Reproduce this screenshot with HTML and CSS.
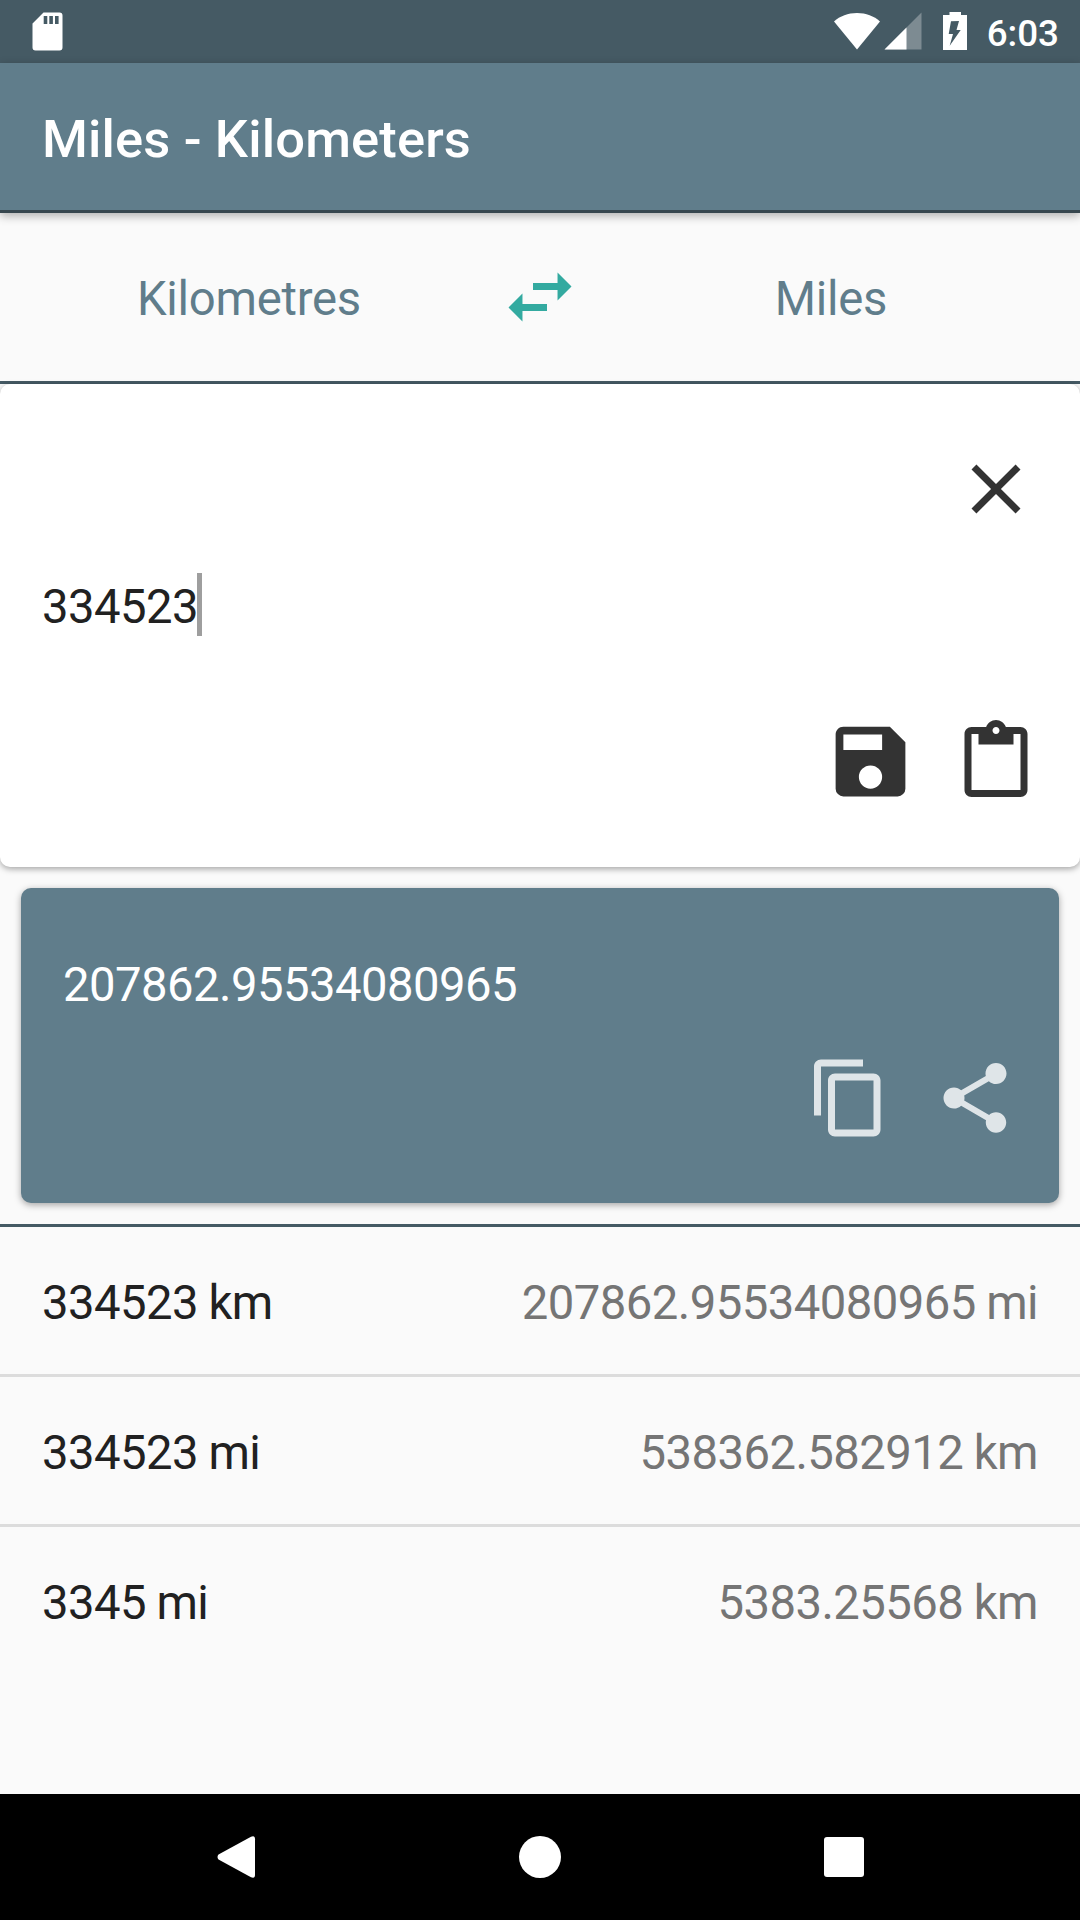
FILE: index.html
```
<!DOCTYPE html>
<html lang="en">
<head>
  <meta charset="UTF-8" />
  <meta name="viewport" content="width=device-width, initial-scale=1.0"/>
  <title>Miles - Kilometers</title>
  <link rel="stylesheet" href="styles.css">
</head>
<body>
  <div class="screen">
    <div class="status-bar">
      <svg class="sd-icon" width="31" height="39" viewBox="0 0 31 39" fill="#fff">
        <path fill-rule="evenodd" d="M11.5 0.5H27.5a3 3 0 0 1 3 3V35.5a3 3 0 0 1-3 3H3.5a3 3 0 0 1-3-3V11.5ZM11.7 4v8h3.6v-8ZM17.3 4v8h3.6v-8ZM23 4v8h3.6v-8Z"/>
      </svg>
      <div class="status-right">
        <svg class="wifi-icon" width="46" height="37" viewBox="0 0 46 37" fill="#fff">
          <path d="M0 8.5C6 3 14 0 23 0s17 3 23 8.5L23 36.5Z"/>
        </svg>
        <svg class="signal-icon" width="38" height="38" viewBox="0 0 38 38" fill="#fff">
          <path opacity="0.3" d="M0.5 37.5H37.5V0.5Z"/>
          <path d="M0.5 37.5H22.5V15.5Z"/>
        </svg>
        <svg class="battery-icon" width="24" height="38" viewBox="0 0 24 38" fill="#fff">
          <path fill-rule="evenodd" d="M6.5 0H18V3H24V38H0V3H6.5ZM8 9.2L5.7 22H10L6.7 33.8L17.7 18H13.5L16 9Z"/>
        </svg>
        <span class="time">6:03</span>
      </div>
    </div>

    <div class="app-bar">
      <h1>Miles - Kilometers</h1>
    </div>

    <div class="units">
      <span class="unit">Kilometres</span>
      <svg class="icon swap" viewBox="0 0 24 24">
        <path d="M6.99 11L3 15l3.99 4v-3H14v-2H6.99v-3zM21 9l-3.99-4v3H10v2h7.01v3L21 9z"/>
      </svg>
      <span class="unit">Miles</span>
    </div>

    <div class="input-card">
      <svg class="icon" viewBox="0 0 24 24">
        <path d="M19 6.41L17.59 5 12 10.59 6.41 5 5 6.41 10.59 12 5 17.59 6.41 19 12 13.41 17.59 19 19 17.59 13.41 12z"/>
      </svg>
      <div class="field"><span>334523</span><i class="cursor"></i></div>
      <div class="actions">
        <svg class="icon save" viewBox="0 0 24 24">
          <path d="M15 9H5V5H15M12 19A3 3 0 0 1 9 16A3 3 0 0 1 12 13A3 3 0 0 1 15 16A3 3 0 0 1 12 19M17 3H5C3.89 3 3 3.9 3 5V19A2 2 0 0 0 5 21H19A2 2 0 0 0 21 19V7L17 3Z"/>
        </svg>
        <svg class="icon" viewBox="0 0 24 24">
          <path d="M19 2h-4.18C14.4.84 13.3 0 12 0c-1.3 0-2.4.84-2.82 2H5c-1.1 0-2 .9-2 2v16c0 1.1.9 2 2 2h14c1.1 0 2-.9 2-2V4c0-1.1-.9-2-2-2zm-7 0c.55 0 1 .45 1 1s-.45 1-1 1-1-.45-1-1 .45-1 1-1zm7 18H5V4h2v3h10V4h2v16z"/>
        </svg>
      </div>
    </div>

    <div class="result-card">
      <div class="result">207862.95534080965</div>
      <div class="actions">
        <svg class="icon" viewBox="0 0 24 24">
          <path d="M16 1H4c-1.1 0-2 .9-2 2v14h2V3h12V1zm3 4H8c-1.1 0-2 .9-2 2v14c0 1.1.9 2 2 2h11c1.1 0 2-.9 2-2V7c0-1.1-.9-2-2-2zm0 16H8V7h11v14z"/>
        </svg>
        <svg class="icon" viewBox="0 0 24 24">
          <path d="M18 16.08c-.76 0-1.44.3-1.96.77L8.91 12.7c.05-.23.09-.46.09-.7s-.04-.47-.09-.7l7.05-4.11c.54.5 1.25.81 2.04.81 1.66 0 3-1.34 3-3s-1.34-3-3-3-3 1.34-3 3c0 .24.04.47.09.7L8.04 9.81C7.5 9.31 6.79 9 6 9c-1.66 0-3 1.34-3 3s1.34 3 3 3c.79 0 1.5-.31 2.04-.81l7.12 4.16c-.05.21-.08.43-.08.65 0 1.61 1.31 2.92 2.92 2.92s2.92-1.31 2.92-2.92-1.31-2.92-2.92-2.92z"/>
        </svg>
      </div>
    </div>

    <div class="history">
      <div class="row">
        <span class="from">334523 km</span>
        <span class="to">207862.95534080965 mi</span>
      </div>
      <div class="row">
        <span class="from">334523 mi</span>
        <span class="to">538362.582912 km</span>
      </div>
      <div class="row">
        <span class="from">3345 mi</span>
        <span class="to">5383.25568 km</span>
      </div>
    </div>

    <div class="nav-bar">
      <svg width="42" height="42" viewBox="0 0 42 42" fill="#fff">
        <path d="M2.5 18.5L35 0.7Q39 -1 39 3.2V38.8Q39 43 35 41.3L2.5 23.5Q0.5 21 2.5 18.5Z"/>
      </svg>
      <svg width="42" height="42" viewBox="0 0 42 42" fill="#fff">
        <circle cx="21" cy="21" r="21"/>
      </svg>
      <svg width="42" height="42" viewBox="0 0 42 42" fill="#fff">
        <rect x="2" y="1" width="40" height="40" rx="3"/>
      </svg>
    </div>
  </div>
</body>
</html>
```
FILE: styles.css
```
* {
  box-sizing: border-box;
}
body {
  font-family: Roboto, sans-serif;
  font-size: 47.25px;
  letter-spacing: -0.55px;
  word-spacing: -0.8px;
  color: #212121;
  margin: 0;
}
svg {
  display: block;
  flex: none;
}
.screen {
  width: 1080px;
  height: 1920px;
  background-color: #fafafa;
  display: flex;
  flex-direction: column;
  overflow: hidden;
}
.status-bar {
  height: 63px;
  flex: none;
  display: flex;
  justify-content: space-between;
  padding: 12px 21px 0 32px;
  background-color: #455a64;
}
.status-right {
  display: flex;
}
.wifi-icon {
  margin: 1px 4px 0 0;
}
.battery-icon {
  margin: 0 20px 0 21px;
}
.time {
  font-size: 36.75px;
  line-height: 43px;
  letter-spacing: 0;
  font-weight: 500;
  color: #fff;
}
.app-bar {
  height: 150px;
  flex: none;
  padding: 3px 42px 0;
  background-color: #607d8b;
  border-bottom: 3px solid #37474f;
  box-shadow: 0 3px 9px rgba(0,0,0,0.3);
}
.app-bar h1 {
  margin: 0;
  font-size: 52.5px;
  line-height: 147px;
  letter-spacing: 0.14px;
  word-spacing: 0;
  font-weight: 500;
  color: #fff;
}
.units {
  height: 171px;
  flex: none;
  display: grid;
  grid-template-columns: 1fr 84px 1fr;
  align-items: center;
  text-align: center;
  color: #607d8b;
  border-bottom: 3px solid #455a64;
}
.unit {
  padding-top: 4px;
  letter-spacing: -0.25px;
}
.icon {
  width: 84px;
  height: 84px;
  fill: #333;
}
.icon.swap {
  fill: #33aaa0;
}
.icon.save {
  width: 93px;
  height: 93px;
  margin-right: -4.5px;
}
.input-card {
  height: 483px;
  flex: none;
  display: flex;
  flex-direction: column;
  align-items: flex-end;
  padding: 63px 42px;
  background-color: #fff;
  border-radius: 10px;
  box-shadow: 0 2px 6px rgba(0,0,0,0.35);
}
.field {
  align-self: stretch;
  display: flex;
  align-items: flex-start;
  height: 63px;
  margin: 42px 0 79px;
  line-height: 69px;
}
.cursor {
  width: 5px;
  height: 63px;
  margin-left: -1px;
  background-color: #9e9e9e;
}
.actions {
  display: flex;
  align-items: center;
  justify-content: flex-end;
  gap: 42px;
}
.result-card {
  height: 315px;
  flex: none;
  margin: 21px;
  padding: 63px 42px;
  display: flex;
  flex-direction: column;
  justify-content: space-between;
  background-color: #607d8b;
  border-radius: 10px;
  box-shadow: 0 2px 7px rgba(0,0,0,0.35);
}
.result {
  line-height: 68px;
  color: #fff;
}
.result-card .icon {
  fill: #dfe5e8;
}
.history {
  flex: 1;
  border-top: 3px solid #455a64;
}
.row {
  height: 150px;
  display: flex;
  justify-content: space-between;
  padding: 3px 42px 0;
  line-height: 147px;
  border-bottom: 3px solid #dcdcdc;
}
.row:last-child {
  border-bottom: none;
}
.to {
  color: #757575;
}
.nav-bar {
  height: 126px;
  flex: none;
  display: flex;
  align-items: center;
  justify-content: space-between;
  padding: 0 216px;
  background-color: #000;
}
```
